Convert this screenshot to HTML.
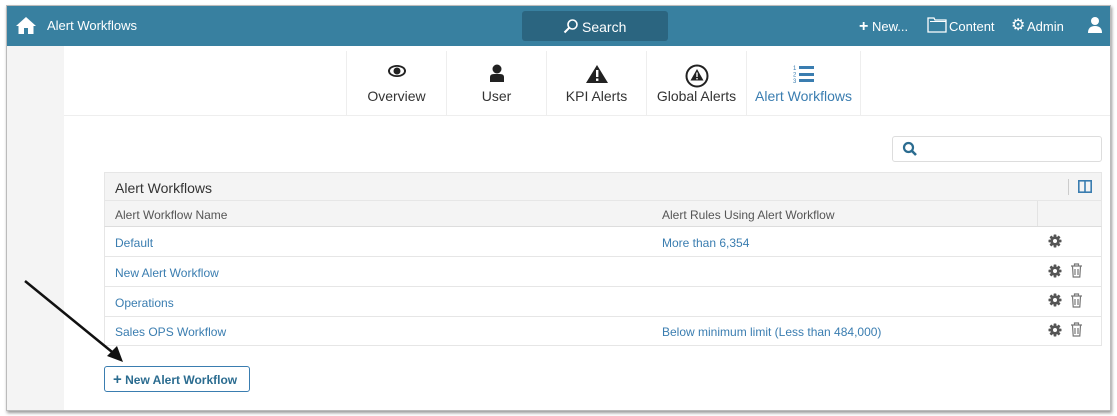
<!DOCTYPE html>
<html><head><style>
*{box-sizing:border-box;margin:0;padding:0}
body{width:1117px;height:416px;background:#fff;font-family:"Liberation Sans",sans-serif;position:relative;overflow:hidden}
.frame{position:absolute;left:6px;top:5px;width:1105px;height:406px;border:1px solid #bbb;box-shadow:1px 2px 3px #999;background:#fff;overflow:hidden}
.top{position:absolute;left:0;top:0;width:1104px;height:40px;background:#3880a0;color:#fff}
.side{position:absolute;left:0;top:40px;width:57px;height:370px;background:#f4f4f4}
.a{position:absolute;white-space:nowrap}
.tab{position:absolute;top:45px;height:65px;border-left:1px solid #eee;text-align:center;font-size:14px;color:#333}
.tab span{position:absolute;left:0;right:0;top:37px}
.tab svg{position:absolute;top:13px;left:50%;transform:translateX(-50%)}
.link{color:#3a7db0;font-size:12px}
.row{position:absolute;left:97px;width:998px;border-bottom:1px solid #e6e6e6;border-left:1px solid #e6e6e6;border-right:1px solid #e6e6e6}
</style></head><body>
<svg width="0" height="0" style="position:absolute"><defs>
<g id="gear"><g fill="#555"><circle cx="7" cy="7" r="4.6"/><rect x="5.6" y="0.5" width="2.8" height="13" rx="0.6"/><rect x="0.5" y="5.6" width="13" height="2.8" rx="0.6"/><rect x="5.6" y="0.5" width="2.8" height="13" rx="0.6" transform="rotate(45 7 7)"/><rect x="5.6" y="0.5" width="2.8" height="13" rx="0.6" transform="rotate(-45 7 7)"/></g><circle cx="7" cy="7" r="2" fill="#fff"/></g>
<g id="trash"><path d="M1 3h11M4.5 3V1h4v2M2.5 3.5l.7 10.5h6.6l.7-10.5M5 6v6M8 6v6" stroke="#777" fill="none" stroke-width="1.2"/></g>
</defs></svg>
<div class="frame">
<div class="top">
 <svg class="a" style="left:8px;top:10px" width="22" height="19" viewBox="0 0 22 19"><path d="M11 1 L1 10 L3.5 10 L3.5 18 L9 18 L9 12 L13 12 L13 18 L18.5 18 L18.5 10 L21 10 Z" fill="#fff"/></svg>
 <div class="a" style="left:40px;top:12px;font-size:13px">Alert Workflows</div>
 <div class="a" style="left:515px;top:5px;width:146px;height:30px;background:#2b6580;border-radius:3px"></div>
 <svg class="a" style="left:556px;top:12px" width="16" height="16" viewBox="0 0 16 16"><circle cx="9.5" cy="6.5" r="4.5" stroke="#fff" stroke-width="1.6" fill="none"/><path d="M6 10 L1.5 14.5" stroke="#fff" stroke-width="2"/></svg>
 <div class="a" style="left:575px;top:13px;font-size:14px">Search</div>
 <div class="a" style="left:852px;top:12px;font-size:13px"><b style="font-size:16px">+</b> New...</div>
 <svg class="a" style="left:920px;top:11px" width="20" height="16" viewBox="0 0 20 16"><path d="M1 1h6l1 2h11v12H1z" stroke="#fff" fill="none" stroke-width="1.3"/><path d="M3 4.5h16" stroke="#fff"/></svg>
 <div class="a" style="left:942px;top:13px;font-size:13px">Content</div>
 <div class="a" style="left:1004px;top:9px;font-size:16px">⚙</div>
 <div class="a" style="left:1020px;top:13px;font-size:13px">Admin</div>
 <svg class="a" style="left:1080px;top:10px" width="16" height="17" viewBox="0 0 16 17"><circle cx="8" cy="5" r="4" fill="#fff"/><path d="M1 17 Q1 10 8 10 Q15 10 15 17Z" fill="#fff"/></svg>
</div>
<div class="side"></div>
<div class="a" style="left:57px;top:109px;width:1048px;border-top:1px solid #eee"></div>
<div class="tab" style="left:339px;width:100px"><svg width="20" height="14" viewBox="0 0 20 14"><ellipse cx="10" cy="7" rx="9" ry="6" fill="#222"/><ellipse cx="10" cy="7" rx="7" ry="4.3" fill="#fff"/><circle cx="10" cy="7" r="3.5" fill="#222"/></svg><span>Overview</span></div>
<div class="tab" style="left:439px;width:100px"><svg width="16" height="18" viewBox="0 0 16 18"><circle cx="8" cy="5" r="4.5" fill="#222"/><path d="M1 18 V13 Q1 10 5 10 H11 Q15 10 15 13 V18Z" fill="#222"/></svg><span>User</span></div>
<div class="tab" style="left:539px;width:100px"><svg width="24" height="20" viewBox="0 0 24 20"><path d="M12 1 L23 19 H1Z" fill="#222"/><rect x="11" y="6" width="2.4" height="7" fill="#fff"/><rect x="11" y="14.5" width="2.4" height="2.4" fill="#fff"/></svg><span>KPI Alerts</span></div>
<div class="tab" style="left:639px;width:100px"><svg width="24" height="24" viewBox="0 0 24 24"><circle cx="12" cy="12" r="10.5" stroke="#222" stroke-width="2" fill="none"/><path d="M12 5 L18.5 16.5 H5.5Z" fill="#222"/><rect x="11.3" y="8.5" width="1.4" height="4.5" fill="#fff"/><rect x="11.3" y="14" width="1.4" height="1.4" fill="#fff"/></svg><span>Global Alerts</span></div>
<div class="tab" style="left:739px;width:115px;border-right:1px solid #eee;color:#3a7db0"><svg width="22" height="20" viewBox="0 0 22 20"><text x="0" y="6" font-size="6" fill="#3a7db0" font-family="Liberation Sans">1</text><text x="0" y="12.5" font-size="6" fill="#3a7db0" font-family="Liberation Sans">2</text><text x="0" y="19" font-size="6" fill="#3a7db0" font-family="Liberation Sans">3</text><rect x="6" y="2" width="15" height="3" fill="#3a7db0"/><rect x="6" y="9" width="15" height="3" fill="#3a7db0"/><rect x="6" y="15" width="15" height="3" fill="#3a7db0"/></svg><span>Alert Workflows</span></div>

<div class="a" style="left:885px;top:130px;width:210px;height:26px;border:1px solid #ddd;border-radius:3px"></div>
<svg class="a" style="left:895px;top:135px" width="16" height="16" viewBox="0 0 16 16"><circle cx="6.5" cy="6.5" r="4.5" stroke="#2b6c90" stroke-width="2.2" fill="none"/><path d="M10 10 L14 14" stroke="#2b6c90" stroke-width="2.6"/></svg>

<div class="row" style="top:166px;height:29px;background:#f4f4f4;border-top:1px solid #e6e6e6"></div>
<div class="a" style="left:108px;top:174px;font-size:14px;color:#333">Alert Workflows</div>
<div class="a" style="left:1061px;top:173px;height:16px;border-left:1px solid #ccc"></div>
<svg class="a" style="left:1071px;top:174px" width="14" height="13" viewBox="0 0 14 13"><rect x="0.8" y="0.8" width="12.4" height="11.4" stroke="#3a7db0" stroke-width="1.6" fill="none"/><path d="M7 1v11" stroke="#3a7db0" stroke-width="1.6"/></svg>
<div class="row" style="top:195px;height:26px;background:#f4f4f4;border-bottom:1px solid #ddd"></div>
<div class="a" style="left:1030px;top:195px;height:25px;border-left:1px solid #e3e3e3"></div>
<div class="a" style="left:108px;top:202px;font-size:12px;color:#555">Alert Workflow Name</div>
<div class="a" style="left:655px;top:202px;font-size:12px;color:#555">Alert Rules Using Alert Workflow</div>

<div class="row" style="top:221px;height:30px"></div>
<div class="row" style="top:251px;height:30px"></div>
<div class="row" style="top:281px;height:30px"></div>
<div class="row" style="top:311px;height:29px"></div>
<div class="a link" style="left:108px;top:230px">Default</div>
<div class="a link" style="left:655px;top:230px">More than 6,354</div>
<div class="a link" style="left:108px;top:260px">New Alert Workflow</div>
<div class="a link" style="left:108px;top:290px">Operations</div>
<div class="a link" style="left:108px;top:319px">Sales OPS Workflow</div>
<div class="a link" style="left:655px;top:319px">Below minimum limit (Less than 484,000)</div>
<svg class="a" style="left:1041px;top:228px" width="14" height="14"><use href="#gear"/></svg>
<svg class="a" style="left:1041px;top:258px" width="14" height="14"><use href="#gear"/></svg>
<svg class="a" style="left:1041px;top:287px" width="14" height="14"><use href="#gear"/></svg>
<svg class="a" style="left:1041px;top:317px" width="14" height="14"><use href="#gear"/></svg>
<svg class="a" style="left:1063px;top:257px" width="13" height="15"><use href="#trash"/></svg>
<svg class="a" style="left:1063px;top:287px" width="13" height="15"><use href="#trash"/></svg>
<svg class="a" style="left:1063px;top:316px" width="13" height="15"><use href="#trash"/></svg>

<div class="a" style="left:97px;top:360px;width:146px;height:26px;border:1px solid #3a7db0;border-radius:3px;color:#2b6c90;font-size:12px;font-weight:bold;padding:6px 0 0 8px"><span style="font-size:15px;line-height:10px">+</span> New Alert Workflow</div>
<svg class="a" style="left:10px;top:270px" width="110" height="90" viewBox="0 0 110 90"><path d="M8 5 L100 80" stroke="#111" stroke-width="2.5"/><path d="M106 86 L90 80 L100 70Z" fill="#111"/></svg>
</div>
</body></html>
